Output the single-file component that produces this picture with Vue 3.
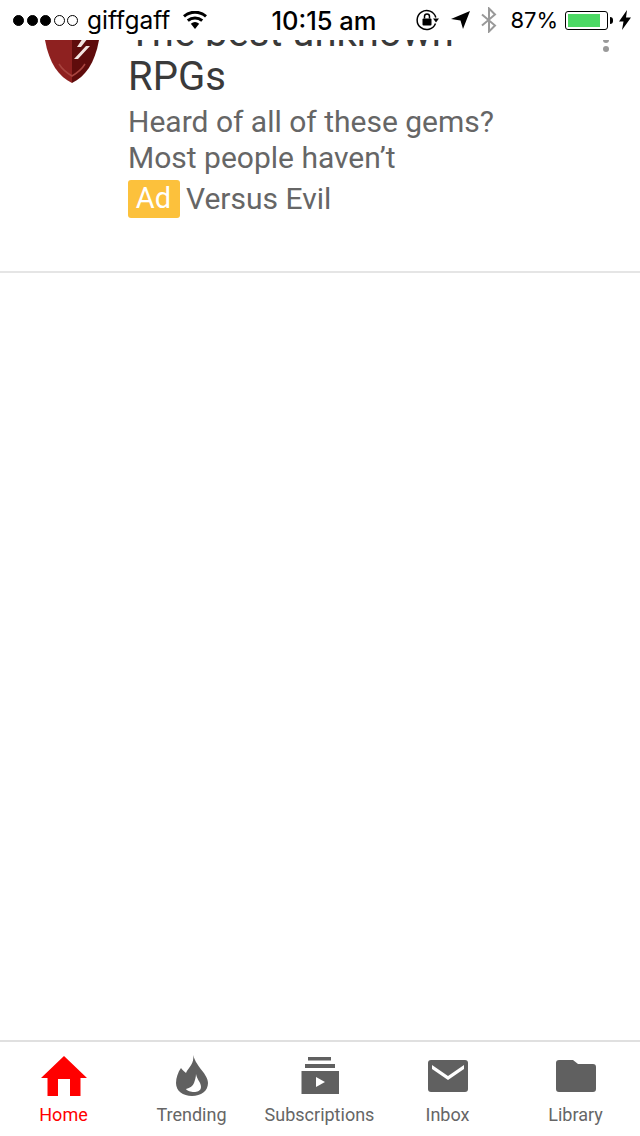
<template>
  <div class="page">
    <div class="status-bar">
      <div class="signal">
        <span v-for="n in 5" :key="n" class="dot" :class="{ on: n <= 3 }"></span>
      </div>
      <span class="carrier">giffgaff</span>
      <svg class="wifi" width="24" height="18" viewBox="0 0 24 18">
        <path d="M12 18L7.800 12.800a6.700 6.700 0 0 1 8.400 0z" fill="#000" />
        <path d="M4.800 9.700a11 11 0 0 1 14.400 0" fill="none" stroke="#000" stroke-width="3" />
        <path d="M1 5.300a16.800 16.800 0 0 1 22 0" fill="none" stroke="#000" stroke-width="3" />
      </svg>
      <span class="time">10:15 am</span>
      <svg class="lock" width="24" height="22" viewBox="0 0 24 22">
        <path d="M19.500 14.500a9.500 9.500 0 1 1 .3-6" fill="none" stroke="#000" stroke-width="1.500" />
        <path d="M17 9.500h6l-3 4z" fill="#000" />
        <rect x="6.500" y="9.500" width="9" height="7" rx="1" fill="#000" />
        <path d="M8.500 9.500V7.500a2.500 2.500 0 0 1 5 0v2" fill="none" stroke="#000" stroke-width="1.500" />
      </svg>
      <svg class="arrow" width="19" height="18" viewBox="0 0 19 18">
        <path d="M19 0L12 18l-2.500-8.500L0 8z" fill="#000" />
      </svg>
      <svg class="bt" width="16" height="26" viewBox="0 0 16 26">
        <path d="M1 7.500l13 11-6 6V1.500l6 6-13 11" fill="none" stroke="#999" stroke-width="2" />
      </svg>
      <span class="percent">87%</span>
      <div class="battery">
        <div class="level" :style="{ width: battery + '%' }"></div>
      </div>
      <span class="nub"></span>
      <svg class="bolt" width="12" height="20" viewBox="0 0 12 20">
        <path d="M8 0L0 11.500h4.500L3 20l9-12.500H7z" fill="#000" />
      </svg>
    </div>

    <div class="feed">
      <div class="card">
        <div class="avatar">
          <svg width="54" height="60" viewBox="0 0 54 60">
            <path d="M0 0h27v60C14 54 4 40 0 17z" fill="#8e2120" />
            <path d="M54 0H27v60c13-6 23-20 27-43z" fill="#5f0c0c" />
            <path d="M14 41c3 5 8 9 13 12 5-3 10-7 13-12" fill="none" stroke="#a8443f" stroke-width="1.500" />
            <path d="M38 15h5l-7 9h-4zM41 23h4L33 36h-4z" fill="#f3e4e0" />
          </svg>
        </div>
        <div class="info">
          <h2 class="title">The best unknown RPGs</h2>
          <p class="desc">Heard of all of these gems?<br />Most people haven’t</p>
          <div class="advertiser">
            <span class="badge">Ad</span>
            <span>Versus Evil</span>
          </div>
        </div>
        <div class="menu">
          <span></span>
          <span></span>
        </div>
      </div>
    </div>

    <nav class="tabs">
      <div v-for="tab in tabs" :key="tab.label" class="tab" :class="{ active: tab.active }">
        <svg width="52" height="44" viewBox="0 0 52 44" v-html="tab.icon"></svg>
        <span>{{ tab.label }}</span>
      </div>
    </nav>
  </div>
</template>

<script setup>
const battery = 87;

const tabs = [
  {
    label: "Home",
    active: true,
    icon: '<path d="M26 1L3 23h6.500v18H20V24h12v17h10.500V23H49z" fill="#f00"/>',
  },
  {
    label: "Trending",
    icon: '<path fill-rule="evenodd" d="M27 0C29 8 22 13 20 18 18 16 16 15 15 13 12 17 10 23 10 28 10 36 17 41 26 41 35 41 42 36 42 28 42 19 31 13 27 0zM30 19C31 25 35 27 35 32 35 36 31 37 28 37 25 37 21 36 20 34 24 33 27 31 28 28 29 25 30 22 30 19z" fill="#606060"/>',
  },
  {
    label: "Subscriptions",
    icon: '<path d="M14 2h23v3.500H14zM11 9h30v4H11zM7.500 16h37.500v23H7.500z" fill="#606060"/><path d="M22 22l9 5-9 5z" fill="#fff"/>',
  },
  {
    label: "Inbox",
    icon: '<rect x="6" y="5" width="40" height="32" rx="3" fill="#606060"/><path d="M10 10l16 11 16-11v4L26 25 10 14z" fill="#fff"/>',
  },
  {
    label: "Library",
    icon: '<path d="M9 5h14l5 4h15a3 3 0 0 1 3 3v22a3 3 0 0 1-3 3H9a3 3 0 0 1-3-3V8a3 3 0 0 1 3-3z" fill="#606060"/>',
  },
];
</script>

<style>
html, body { margin: 0; background: #fff; }
</style>

<style scoped>
.page {
  width: 640px;
  height: 1136px;
  display: flex;
  flex-direction: column;
  overflow: hidden;
  background: #fff;
  font-family: Roboto, sans-serif;
}

.status-bar {
  position: relative;
  z-index: 1;
  height: 40px;
  flex: none;
  display: flex;
  align-items: center;
  padding-left: 13px;
  font-family: Inter, "Liberation Sans", sans-serif;
  font-size: 25px;
  color: #000;
  background: #fff;
}
.signal { display: flex; gap: 2.500px; }
.dot {
  width: 9px;
  height: 9px;
  border: 1px solid #000;
  border-radius: 50%;
}
.dot.on { background: #000; }
.carrier { margin-left: 9px; font-size: 24.500px; }
.wifi { margin-left: 13px; }
.time { margin-left: 64px; font-size: 25.500px; font-weight: 500; }
.lock { margin-left: 40px; }
.arrow { margin-left: 11px; }
.bt { margin-left: 11px; }
.percent { margin-left: 13px; font-size: 22px; }
.battery {
  width: 43px;
  height: 19px;
  margin-left: 7px;
  padding: 2px;
  box-sizing: border-box;
  border: 1px solid #000;
  border-radius: 3px;
}
.level { height: 100%; background: #4cd964; }
.nub {
  width: 3px;
  height: 7px;
  margin-left: 2px;
  background: #000;
  border-radius: 0 3px 3px 0;
}
.bolt { margin-left: 6px; }

.feed {
  flex: 1;
  overflow: hidden;
}
.card {
  display: flex;
  margin-top: -29px;
  height: 260px;
  border-bottom: 2px solid #e5e5e5;
}
.avatar {
  width: 128px;
  flex: none;
  padding: 12px 0 0 45px;
  box-sizing: border-box;
}
.info { width: 370px; }
.title {
  margin: 0;
  font-size: 40px;
  line-height: 44px;
  font-weight: 400;
  color: #3a3a3a;
}
.desc {
  margin: 5px 0 0;
  font-size: 30px;
  line-height: 36px;
  color: #666;
}
.advertiser {
  display: flex;
  align-items: center;
  gap: 6px;
  margin-top: 4px;
  font-size: 30px;
  line-height: 38px;
  color: #666;
}
.badge {
  width: 52px;
  height: 38px;
  text-align: center;
  font-size: 29px;
  line-height: 36px;
  padding-right: 1px;
  box-sizing: border-box;
  color: #fff;
  background: #fcc13c;
  border-radius: 3px;
}
.menu {
  margin-left: 105px;
  padding-top: 26px;
  display: flex;
  flex-direction: column;
  gap: 3px;
}
.menu span {
  width: 6px;
  height: 6px;
  border-radius: 50%;
  background: #999;
}

.tabs {
  flex: none;
  height: 94px;
  display: grid;
  grid-template-columns: repeat(5, 128px);
  border-top: 2px solid #e0e0e0;
}
.tab {
  display: flex;
  flex-direction: column;
  align-items: center;
  padding-top: 13px;
  font-size: 18px;
  line-height: 22px;
  color: #666;
}
.tab svg { display: block; margin-bottom: 5px; }
.tab span { margin-right: 1px; }
.tab.active { color: #f00; }
</style>
